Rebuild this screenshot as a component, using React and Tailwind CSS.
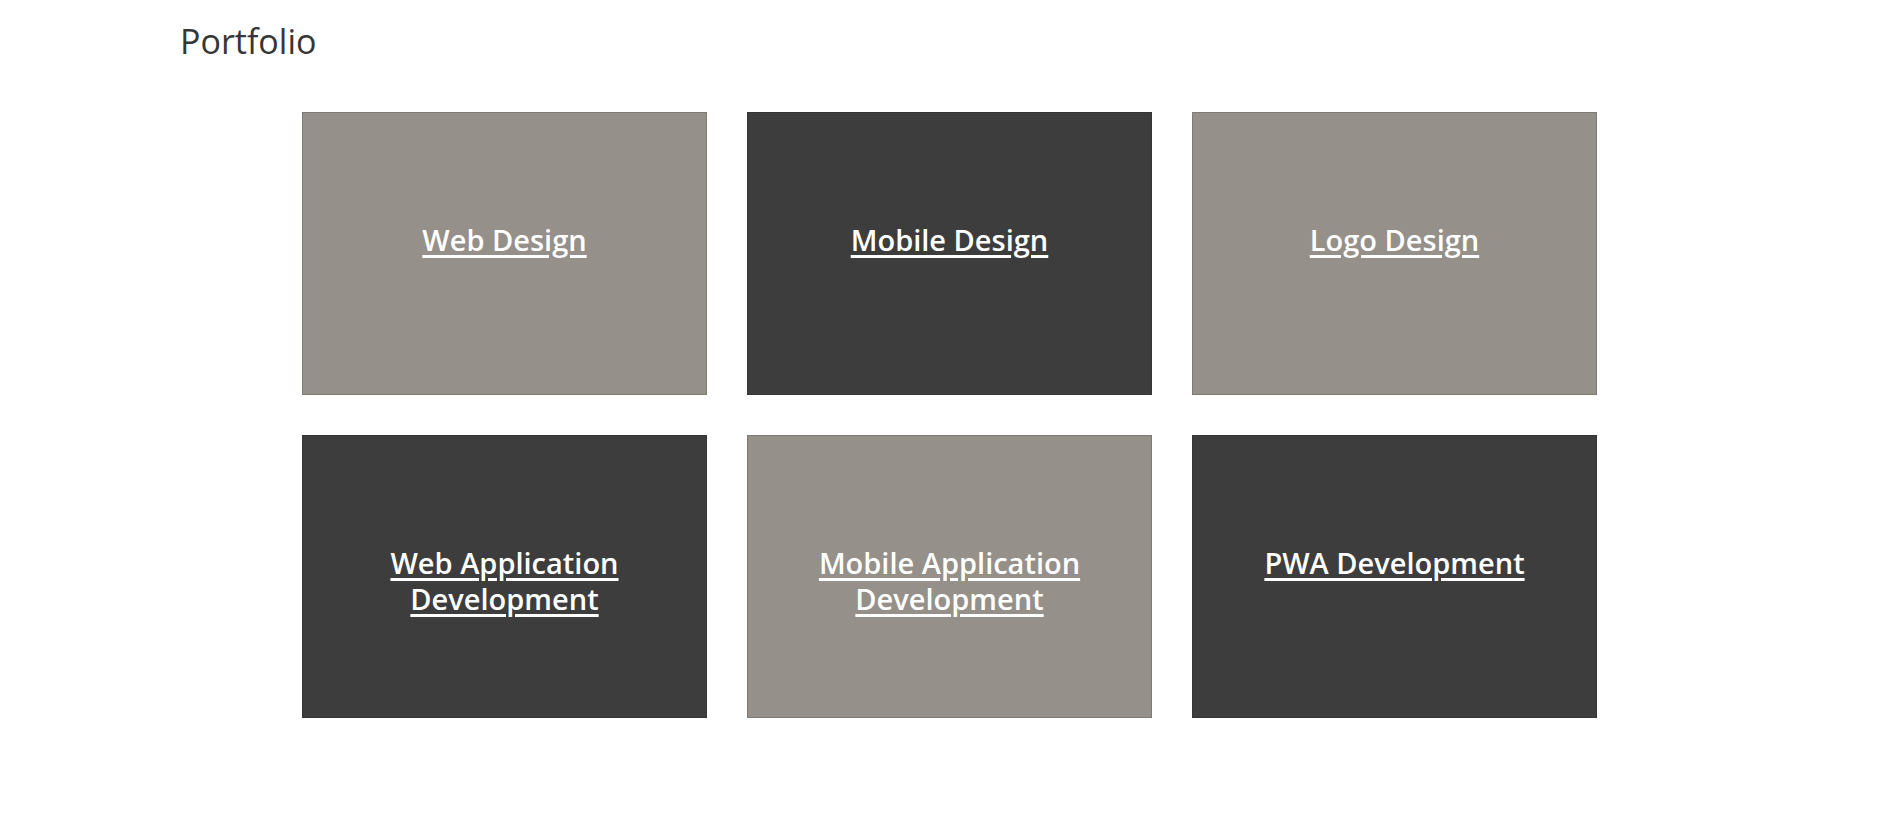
const items = [
  { title: 'Web Design', tone: 'light' },
  { title: 'Mobile Design', tone: 'dark' },
  { title: 'Logo Design', tone: 'light' },
  { title: 'Web Application Development', tone: 'dark' },
  { title: 'Mobile Application Development', tone: 'light' },
  { title: 'PWA Development', tone: 'dark' },
];

export default function App() {
  return (
    <div className="min-h-screen bg-white font-['Open_Sans',sans-serif]">
      <h1 className="pl-[180px] pt-[21px] text-[34px] leading-[41px] font-medium text-[#363636]">
        Portfolio
      </h1>

      {/* Portfolio tiles */}
      <div className="mt-[50px] ml-[302px] grid grid-cols-[repeat(3,405px)] gap-x-[40px] gap-y-[40px]">
        {items.map(item => (
          <a
            key={item.title}
            href="#"
            className={
              item.tone === 'light'
                ? 'h-[283px] border border-[#7f7b74] bg-[#959089] px-[40px] pt-[109px] text-center'
                : 'h-[283px] border border-[#353535] bg-[#3d3d3d] px-[40px] pt-[109px] text-center'
            }
          >
            <span className="text-[29px] leading-[36px] font-semibold text-white underline decoration-[3px] underline-offset-[4px]">
              {item.title}
            </span>
          </a>
        ))}
      </div>
    </div>
  );
}
